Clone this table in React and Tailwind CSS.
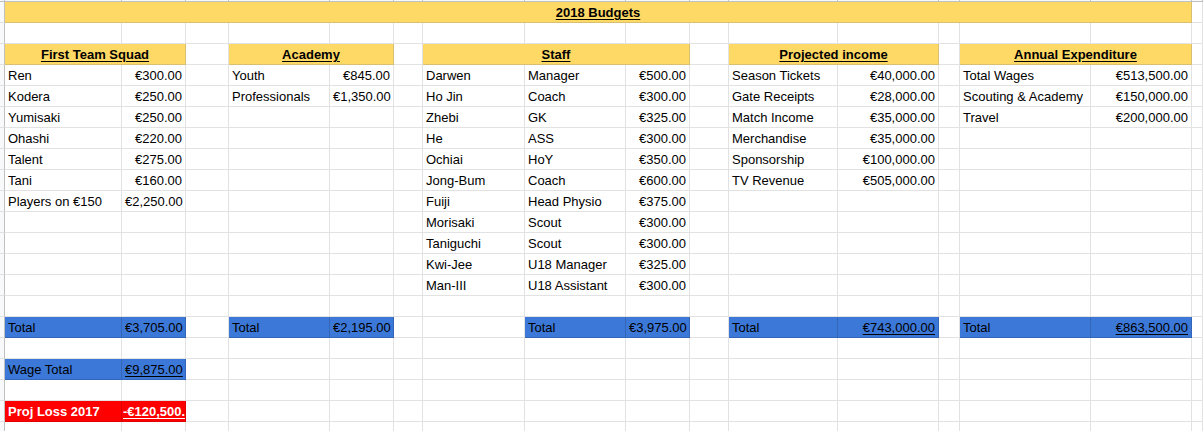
const COLS = "grid-cols-[5px_117px_64px_43px_101px_64px_29px_102px_101px_64px_39px_109px_101px_21px_131px_101px_11px]";

const SPAN = { 1: "", 2: "col-span-2", 3: "col-span-3", 15: "col-span-15" };

const Y = "yellow";
const B = "blue";

// each row: { colIndex: cell } with colIndex 1 = A ... 16 = P
const rows = [
  { 1: { span: 15, t: "2018 Budgets", bg: Y, head: true } },
  {},
  {
    1: { span: 2, t: "First Team Squad", bg: Y, head: true },
    4: { span: 2, t: "Academy", bg: Y, head: true },
    7: { span: 3, t: "Staff", bg: Y, head: true },
    11: { span: 2, t: "Projected income", bg: Y, head: true },
    14: { span: 2, t: "Annual Expenditure", bg: Y, head: true },
  },
  { 1: { t: "Ren" }, 2: { t: "€300.00", r: true }, 4: { t: "Youth" }, 5: { t: "€845.00", r: true }, 7: { t: "Darwen" }, 8: { t: "Manager" }, 9: { t: "€500.00", r: true }, 11: { t: "Season Tickets" }, 12: { t: "€40,000.00", r: true }, 14: { t: "Total Wages" }, 15: { t: "€513,500.00", r: true } },
  { 1: { t: "Kodera" }, 2: { t: "€250.00", r: true }, 4: { t: "Professionals" }, 5: { t: "€1,350.00", r: true }, 7: { t: "Ho Jin" }, 8: { t: "Coach" }, 9: { t: "€300.00", r: true }, 11: { t: "Gate Receipts" }, 12: { t: "€28,000.00", r: true }, 14: { t: "Scouting & Academy" }, 15: { t: "€150,000.00", r: true } },
  { 1: { t: "Yumisaki" }, 2: { t: "€250.00", r: true }, 7: { t: "Zhebi" }, 8: { t: "GK" }, 9: { t: "€325.00", r: true }, 11: { t: "Match Income" }, 12: { t: "€35,000.00", r: true }, 14: { t: "Travel" }, 15: { t: "€200,000.00", r: true } },
  { 1: { t: "Ohashi" }, 2: { t: "€220.00", r: true }, 7: { t: "He" }, 8: { t: "ASS" }, 9: { t: "€300.00", r: true }, 11: { t: "Merchandise" }, 12: { t: "€35,000.00", r: true } },
  { 1: { t: "Talent" }, 2: { t: "€275.00", r: true }, 7: { t: "Ochiai" }, 8: { t: "HoY" }, 9: { t: "€350.00", r: true }, 11: { t: "Sponsorship" }, 12: { t: "€100,000.00", r: true } },
  { 1: { t: "Tani" }, 2: { t: "€160.00", r: true }, 7: { t: "Jong-Bum" }, 8: { t: "Coach" }, 9: { t: "€600.00", r: true }, 11: { t: "TV Revenue" }, 12: { t: "€505,000.00", r: true } },
  { 1: { t: "Players on €150" }, 2: { t: "€2,250.00", r: true }, 7: { t: "Fuiji" }, 8: { t: "Head Physio" }, 9: { t: "€375.00", r: true } },
  { 7: { t: "Morisaki" }, 8: { t: "Scout" }, 9: { t: "€300.00", r: true } },
  { 7: { t: "Taniguchi" }, 8: { t: "Scout" }, 9: { t: "€300.00", r: true } },
  { 7: { t: "Kwi-Jee" }, 8: { t: "U18 Manager" }, 9: { t: "€325.00", r: true } },
  { 7: { t: "Man-III" }, 8: { t: "U18 Assistant" }, 9: { t: "€300.00", r: true } },
  {},
  {
    1: { t: "Total", bg: B }, 2: { t: "€3,705.00", r: true, bg: B },
    4: { t: "Total", bg: B }, 5: { t: "€2,195.00", r: true, bg: B },
    8: { t: "Total", bg: B }, 9: { t: "€3,975.00", r: true, bg: B },
    11: { t: "Total", bg: B }, 12: { t: "€743,000.00", r: true, bg: B, u: true },
    14: { t: "Total", bg: B }, 15: { t: "€863,500.00", r: true, bg: B, u: true },
  },
  {},
  { 1: { t: "Wage Total", bg: B }, 2: { t: "€9,875.00", r: true, bg: B, u: true } },
  {},
  { 1: { t: "Proj Loss 2017", bg: "red", bold: true }, 2: { t: "-€120,500.00", bg: "red", bold: true, u: true, clip: true } },
  {},
];

function Cell({ c }) {
  const bg =
    c.bg === Y
      ? "bg-[#ffd966] border-[#d8c070]"
      : c.bg === B
      ? "bg-[#3c78d8] border-[#3466b8]"
      : c.bg === "red"
      ? "bg-[#ff0000] border-[#e00000] text-white"
      : "border-[#e2e2e2]";
  const align = c.head ? "text-center" : c.r ? "text-right" : "text-left";
  const pad = c.clip ? "pl-[1px] pr-0" : "px-[3px]";
  return (
    <div
      className={`${SPAN[c.span || 1]} ${bg} ${align} ${pad} pt-[2px] border-r border-b overflow-hidden whitespace-nowrap leading-[18px] ${
        c.head || c.bold ? "font-bold" : ""
      } ${c.head || c.u ? "underline underline-offset-[2px]" : ""}`}
    >
      {c.t}
    </div>
  );
}

function Row({ row }) {
  const out = [
    <div key="h" className="bg-[#f8f9fa] border-r border-b border-r-[#c0c0c0] border-b-[#e2e2e2]" />,
  ];
  let i = 1;
  while (i <= 16) {
    const c = row[i];
    if (c) {
      out.push(<Cell key={i} c={c} />);
      i += c.span || 1;
    } else {
      out.push(<div key={i} className="border-r border-b border-[#e2e2e2]" />);
      i += 1;
    }
  }
  return out;
}

export default function App() {
  return (
    <div className="w-[1203px] h-[431px] overflow-hidden bg-white text-[13px] text-black font-['Liberation_Sans',Arial,sans-serif]">
      <div className={`grid ${COLS} h-[2px] bg-[#f8f9fa] border-b border-[#c0c0c0]`}>
        {Array.from({ length: 17 }).map((_, i) => (
          <div key={i} className="border-r border-[#c0c0c0]" />
        ))}
      </div>
      <div className={`grid ${COLS} auto-rows-[21px]`}>
        {rows.map((row, r) => (
          <Row key={r} row={row} />
        ))}
      </div>
    </div>
  );
}
